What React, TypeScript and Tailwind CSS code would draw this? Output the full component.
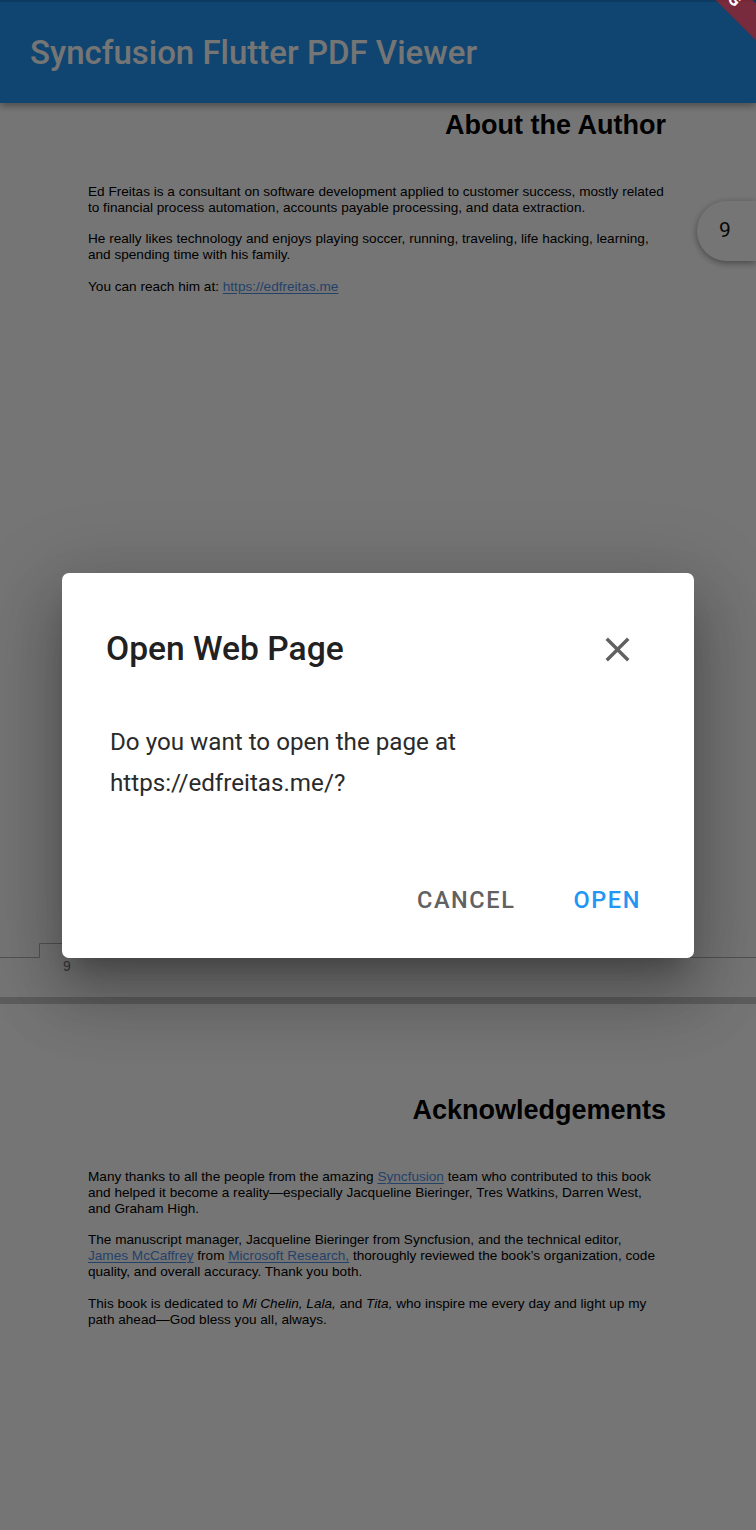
import React from "react";

const pdfFont = "font-['Liberation_Sans',Arial,sans-serif]";

function Link({ children }: { children: React.ReactNode }) {
  return <span className="text-[#4f8fe8] underline underline-offset-2">{children}</span>;
}

function PdfLines({ lines }: { lines: React.ReactNode[] }) {
  return (
    <div>
      {lines.map((l, i) => (
        <div key={i} className="whitespace-nowrap">
          {l}
        </div>
      ))}
    </div>
  );
}

function PageOne() {
  return (
    <section className={`h-[894px] bg-white flex flex-col text-black ${pdfFont}`}>
      <h2 className="pt-[7px] pr-[90px] text-right text-[27px] leading-[30px] font-bold">About the Author</h2>
      <div className="mt-[44px] pl-[88px] text-[13.6px] leading-[16px]">
        <PdfLines
          lines={[
            "Ed Freitas is a consultant on software development applied to customer success, mostly related",
            "to financial process automation, accounts payable processing, and data extraction.",
          ]}
        />
        <div className="mt-[15px]">
          <PdfLines
            lines={[
              "He really likes technology and enjoys playing soccer, running, traveling, life hacking, learning,",
              "and spending time with his family.",
            ]}
          />
        </div>
        <div className="mt-[16px]">
          <PdfLines
            lines={[
              <>
                You can reach him at: <Link>https://edfreitas.me</Link>
              </>,
            ]}
          />
        </div>
      </div>

      {/* page footer */}
      <div className="mt-auto pb-[23px]">
        <svg className="block w-full h-[16px]" viewBox="0 0 756 16" preserveAspectRatio="none">
          <path d="M0 15.5H39.5V1.5H690V15.5H756" fill="none" stroke="#b4b4b4" strokeWidth="1" />
        </svg>
        <div className="pl-[63px] text-[14px] leading-[16px] text-[#7a7a7a]">9</div>
      </div>
    </section>
  );
}

function PageTwo() {
  return (
    <section className={`flex-1 bg-white text-black ${pdfFont}`}>
      <h2 className="pt-[91px] pr-[90px] text-right text-[27px] leading-[30px] font-bold">Acknowledgements</h2>
      <div className="mt-[44px] pl-[88px] text-[13.6px] leading-[16px]">
        <PdfLines
          lines={[
            <>
              Many thanks to all the people from the amazing <Link>Syncfusion</Link> team who contributed to this book
            </>,
            "and helped it become a reality\u2014especially Jacqueline Bieringer, Tres Watkins, Darren West,",
            "and Graham High.",
          ]}
        />
        <div className="mt-[15px]">
          <PdfLines
            lines={[
              "The manuscript manager, Jacqueline Bieringer from Syncfusion, and the technical editor,",
              <>
                <Link>James McCaffrey</Link> from <Link>Microsoft Research,</Link>
                {" thoroughly reviewed the book\u2019s organization, code"}
              </>,
              "quality, and overall accuracy. Thank you both.",
            ]}
          />
        </div>
        <div className="mt-[16px]">
          <PdfLines
            lines={[
              <>
                This book is dedicated to <i>Mi Chelin, Lala,</i> and <i>Tita,</i> who inspire me every day and light up my
              </>,
              "path ahead\u2014God bless you all, always.",
            ]}
          />
        </div>
      </div>
    </section>
  );
}

function CloseIcon() {
  return (
    <svg className="w-[41px] h-[41px]" viewBox="0 0 24 24" fill="#616161">
      <path d="M19 6.41 17.59 5 12 10.59 6.41 5 5 6.41 10.59 12 5 17.59 6.41 19 12 13.41 17.59 19 19 17.59 13.41 12z" />
    </svg>
  );
}

function OpenLinkDialog() {
  return (
    <div className="w-[632px] h-[385px] bg-white rounded-[7px] flex flex-col shadow-[0_40px_64px_5px_rgba(0,0,0,0.18),0_15px_78px_14px_rgba(0,0,0,0.15),0_19px_26px_-12px_rgba(0,0,0,0.24)]">
      <div className="flex items-center justify-between pt-[56px] pl-[44px] pr-[56px]">
        <h3 className="text-[33.6px] leading-[40px] font-medium text-[#212121]">Open Web Page</h3>
        <CloseIcon />
      </div>
      <div className="mt-[52px] pl-[48px] text-[24.2px] leading-[41px] text-[#2a2a2a]">
        <p>Do you want to open the page at</p>
        <p>https://edfreitas.me/?</p>
      </div>
      <div className="mt-auto pb-[44px] pr-[53px] flex justify-end gap-[58px] text-[23.5px] leading-[28px] font-medium tracking-[1.6px]">
        <button type="button" className="text-[#616161]">CANCEL</button>
        <button type="button" className="text-[#2196f3]">OPEN</button>
      </div>
    </div>
  );
}

export default function App() {
  return (
    <div className="relative w-[756px] h-[1530px] overflow-hidden flex flex-col bg-[#cbcbcb] font-['Roboto',sans-serif]">
      <header className="relative z-10 h-[103px] shrink-0 flex items-center pl-[30px] bg-[#2196f3] border-t-2 border-[#1b7fd1] shadow-[0_3px_7px_rgba(0,0,0,0.35)]">
        <h1 className="text-white text-[33px] leading-[40px] font-medium">Syncfusion Flutter PDF Viewer</h1>
      </header>

      <main className="flex-1 flex flex-col gap-[7px]">
        <PageOne />
        <PageTwo />
      </main>

      {/* page number scroll head */}
      <div className="absolute z-20 right-0 top-[201px] w-[59px] h-[60px] rounded-l-[30px] bg-white shadow-[0_2px_7px_rgba(0,0,0,0.4)] flex items-center pl-[22px] text-[21px] text-[#111]">
        9
      </div>

      {/* modal scrim + dialog */}
      <div className="absolute z-30 inset-0 bg-black/[0.54] flex items-center justify-center">
        <OpenLinkDialog />
      </div>

      {/* debug banner */}
      <div className="absolute z-40 top-0 right-0 w-[100px] h-[100px] overflow-hidden pointer-events-none">
        <div className="absolute left-[-18px] top-[-29px] w-[160px] h-[26px] rotate-45 bg-[#b71c1ca0] flex items-center justify-center text-white text-[17px] font-bold tracking-[1px]">
          DEBUG
        </div>
      </div>
    </div>
  );
}
